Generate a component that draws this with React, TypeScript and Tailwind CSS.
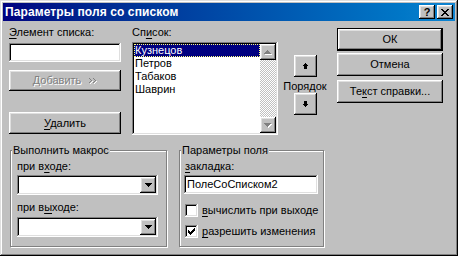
import React from "react";

const RAISED =
  "shadow-[inset_-1px_-1px_#000000,inset_1px_1px_#ffffff,inset_-2px_-2px_#808080,inset_2px_2px_#dfdfdf]";
const SUNKEN =
  "shadow-[inset_-1px_-1px_#ffffff,inset_1px_1px_#808080,inset_-2px_-2px_#dfdfdf,inset_2px_2px_#000000]";

function Pixels({ rows, color, className }: { rows: string[]; color: string; className?: string }) {
  const w = rows[0].length;
  const h = rows.length;
  return (
    <svg width={w} height={h} viewBox={`0 0 ${w} ${h}`} shapeRendering="crispEdges" className={className}>
      {rows.flatMap((r, y) =>
        r.split("").map((c, x) =>
          c === "x" ? <rect key={`${x}-${y}`} x={x} y={y} width={1} height={1} fill={color} /> : null
        )
      )}
    </svg>
  );
}

const DOWN_TRI = ["xxxxxxx", ".xxxxx.", "..xxx..", "...x..."];
const UP_TRI = ["...x...", "..xxx..", ".xxxxx.", "xxxxxxx"];
const UP_ARROW = ["..x..", ".xxx.", "xxxxx", ".xxx.", ".xxx.", ".xxx."];
const DOWN_ARROW = [".xxx.", ".xxx.", ".xxx.", "xxxxx", ".xxx.", "..x.."];
const CLOSE_X = ["xx....xx", ".xx..xx.", "..xxxx..", "...xx...", "..xxxx..", ".xx..xx.", "xx....xx"];
const CHECK = ["......x", ".....xx", "x...xxx", "xx.xxx.", "xxxxx..", ".xxx...", "..x...."];
const CHEVRONS = ["x...x..", ".x...x.", "..x...x", ".x...x.", "x...x.."];

function U({ children }: { children: React.ReactNode }) {
  return <span className="underline decoration-1 underline-offset-2">{children}</span>;
}

function Btn({ children, className = "" }: { children: React.ReactNode; className?: string }) {
  return (
    <div className={`flex items-center justify-center bg-[#c0c0c0] ${RAISED} ${className}`}>{children}</div>
  );
}

function DisabledGlyph({ rows }: { rows: string[] }) {
  const w = rows[0].length + 1;
  const h = rows.length + 1;
  return (
    <div className="relative" style={{ width: w, height: h }}>
      <Pixels rows={rows} color="#ffffff" className="absolute left-[1px] top-[1px]" />
      <Pixels rows={rows} color="#808080" className="absolute left-0 top-0" />
    </div>
  );
}

function Combo() {
  return (
    <div className={`h-[20px] w-[141px] bg-white ${SUNKEN} p-[2px] flex justify-end`}>
      <Btn className="w-[16px] h-[16px]">
        <Pixels rows={DOWN_TRI} color="#000000" />
      </Btn>
    </div>
  );
}

function CheckBox({ checked }: { checked?: boolean }) {
  return (
    <div className={`w-[13px] h-[13px] bg-white ${SUNKEN} flex items-center justify-center`}>
      {checked ? <Pixels rows={CHECK} color="#000000" /> : null}
    </div>
  );
}

function Group({
  title,
  className = "",
  children,
}: {
  title: string;
  className?: string;
  children: React.ReactNode;
}) {
  return (
    <div
      className={`relative h-[97px] border border-[#808080] shadow-[inset_1px_1px_#ffffff,1px_1px_#ffffff] ${className}`}
    >
      <div className="absolute -top-[7px] left-[1px] px-[1px] h-[13px] bg-[#c0c0c0] whitespace-nowrap">{title}</div>
      {children}
    </div>
  );
}

export default function App() {
  return (
    <div className="w-[458px] h-[256px] bg-[#c0c0c0] p-[3px] shadow-[inset_-1px_-1px_#000000,inset_1px_1px_#dfdfdf,inset_-2px_-2px_#808080,inset_2px_2px_#ffffff] text-[11px] leading-[13px] text-black font-['Liberation_Sans',Arial,sans-serif] flex flex-col overflow-hidden">
      {/* Title bar */}
      <div className="h-[18px] flex items-center bg-gradient-to-r from-[#000080] to-[#1084d0] pl-[2px] pr-[2px] shrink-0">
        <div className="text-white font-bold text-[12px] leading-[14px] whitespace-nowrap tracking-[0.1px]">
          Параметры поля со списком
        </div>
        <div className="ml-auto flex gap-[2px]">
          <Btn className="w-[16px] h-[14px]">
            <span className="font-bold text-[11px] leading-[11px] pt-[1px]">?</span>
          </Btn>
          <Btn className="w-[16px] h-[14px]">
            <Pixels rows={CLOSE_X} color="#000000" />
          </Btn>
        </div>
      </div>

      {/* Top section */}
      <div className="flex items-start h-[114px] shrink-0">
        {/* Column A */}
        <div className="ml-[6px] w-[112px] flex flex-col">
          <div className="mt-[5px] h-[13px] whitespace-nowrap">
            <U>Э</U>лемент списка:
          </div>
          <div className={`mt-[4px] h-[19px] bg-white ${SUNKEN}`} />
          <Btn className="mt-[8px] h-[21px]">
            <span className="text-[#808080] [text-shadow:1px_1px_#ffffff] whitespace-nowrap">Добавить</span>
            <span className="ml-[8px]">
              <DisabledGlyph rows={CHEVRONS} />
            </span>
          </Btn>
          <Btn className="mt-[21px] h-[22px]">
            <span>
              <U>У</U>далить
            </span>
          </Btn>
        </div>

        {/* Column B: list */}
        <div className="ml-[11px] w-[146px] flex flex-col">
          <div className="mt-[5px] h-[13px]">
            Сп<U>и</U>сок:
          </div>
          <div className={`mt-[3px] h-[93px] bg-white ${SUNKEN} p-[2px] flex`}>
            <div className="flex-1 flex flex-col">
              <div className="h-[13px] bg-[#000080] text-white border border-dotted border-[#ffff80] leading-[11px]">
                Кузнецов
              </div>
              <div className="h-[13px] pl-[1px]">Петров</div>
              <div className="h-[13px] pl-[1px]">Табаков</div>
              <div className="h-[13px] pl-[1px]">Шаврин</div>
            </div>
            <div className="w-[16px] flex flex-col">
              <Btn className="h-[16px] w-[16px]">
                <DisabledGlyph rows={UP_TRI} />
              </Btn>
              <div className="flex-1 bg-[repeating-conic-gradient(#c0c0c0_0%_25%,#ffffff_0%_50%)] bg-[length:2px_2px]" />
              <Btn className="h-[16px] w-[16px]">
                <DisabledGlyph rows={DOWN_TRI} />
              </Btn>
            </div>
          </div>
        </div>

        {/* Column C: order */}
        <div className="ml-[5px] w-[44px] flex flex-col items-center">
          <Btn className="mt-[34px] w-[23px] h-[22px]">
            <Pixels rows={UP_ARROW} color="#000000" />
          </Btn>
          <div className="mt-[3px] h-[13px]">Порядок</div>
          <Btn className="w-[23px] h-[22px]">
            <Pixels rows={DOWN_ARROW} color="#000000" />
          </Btn>
        </div>

        {/* Column D: buttons */}
        <div className="ml-[10px] w-[106px] flex flex-col">
          <div className="mt-[7px] h-[23px] border border-black flex">
            <Btn className="flex-1">ОК</Btn>
          </div>
          <Btn className="mt-[2px] h-[23px]">Отмена</Btn>
          <Btn className="mt-[4px] h-[23px]">
            <span>
              Те<U>к</U>ст справки...
            </span>
          </Btn>
        </div>
      </div>

      {/* Bottom section */}
      <div className="flex mt-[15px] shrink-0">
        <Group title="Выполнить макрос" className="ml-[7px] w-[157px]">
          <div className="pl-[6px] flex flex-col">
            <div className="mt-[9px] h-[13px]">
              при в<U>х</U>оде:
            </div>
            <div className="mt-[2px]">
              <Combo />
            </div>
            <div className="mt-[6px] h-[13px]">
              при в<U>ы</U>ходе:
            </div>
            <div className="mt-[3px]">
              <Combo />
            </div>
          </div>
        </Group>

        <Group title="Параметры поля" className="ml-[12px] w-[145px]">
          <div className="pl-[4px] flex flex-col">
            <div className="mt-[9px] h-[13px] pl-[1px]">
              <U>з</U>акладка:
            </div>
            <div className={`mt-[2px] h-[19px] w-[134px] bg-white ${SUNKEN} flex items-center pl-[3px]`}>
              ПолеСоСписком2
            </div>
            <div className="mt-[10px] flex items-center ml-[1px]">
              <CheckBox />
              <span className="ml-[4px] whitespace-nowrap">
                <U>в</U>ычислить при выходе
              </span>
            </div>
            <div className="mt-[8px] flex items-center ml-[1px]">
              <CheckBox checked />
              <span className="ml-[4px] whitespace-nowrap">
                <U>р</U>азрешить изменения
              </span>
            </div>
          </div>
        </Group>
      </div>
    </div>
  );
}
